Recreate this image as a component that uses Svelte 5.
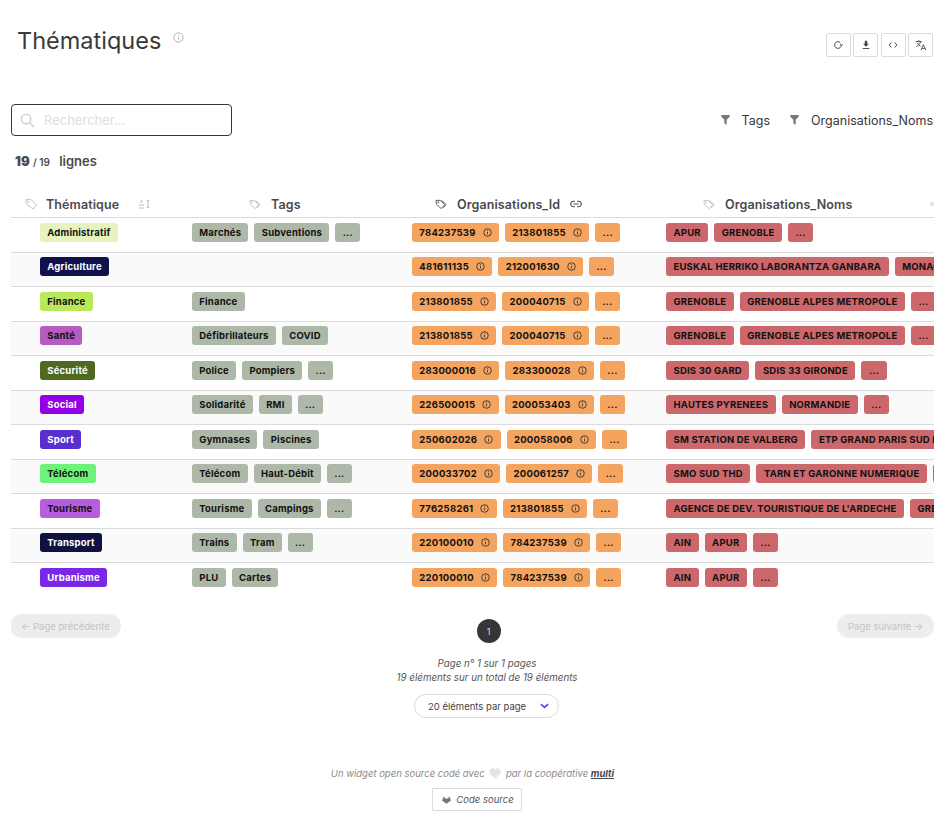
<script>
    const rows = [
        { name: 'Administratif', color: '#e6f3bf', light: true, tags: ['Marchés', 'Subventions', '...'], ids: ['784237539', '213801855'], noms: ['APUR', 'GRENOBLE', '...'] },
        { name: 'Agriculture', color: '#10104d', tags: [], ids: ['481611135', '212001630'], noms: ['EUSKAL HERRIKO LABORANTZA GANBARA', 'MONACO'] },
        { name: 'Finance', color: '#b9e85a', light: true, tags: ['Finance'], ids: ['213801855', '200040715'], noms: ['GRENOBLE', 'GRENOBLE ALPES METROPOLE', '...'] },
        { name: 'Santé', color: '#b45cc0', light: true, tags: ['Défibrillateurs', 'COVID'], ids: ['213801855', '200040715'], noms: ['GRENOBLE', 'GRENOBLE ALPES METROPOLE', '...'] },
        { name: 'Sécurité', color: '#4f6a1f', tags: ['Police', 'Pompiers', '...'], ids: ['283000016', '283300028'], noms: ['SDIS 30 GARD', 'SDIS 33 GIRONDE', '...'] },
        { name: 'Social', color: '#9300e6', tags: ['Solidarité', 'RMI', '...'], ids: ['226500015', '200053403'], noms: ['HAUTES PYRENEES', 'NORMANDIE', '...'] },
        { name: 'Sport', color: '#5a2fd0', tags: ['Gymnases', 'Piscines'], ids: ['250602026', '200058006'], noms: ['SM STATION DE VALBERG', 'ETP GRAND PARIS SUD EST'] },
        { name: 'Télécom', color: '#6df27a', light: true, tags: ['Télécom', 'Haut-Débit', '...'], ids: ['200033702', '200061257'], noms: ['SMO SUD THD', 'TARN ET GARONNE NUMERIQUE', '...'] },
        { name: 'Tourisme', color: '#b85ce0', light: true, tags: ['Tourisme', 'Campings', '...'], ids: ['776258261', '213801855'], noms: ["AGENCE DE DEV. TOURISTIQUE DE L'ARDECHE", 'GRENOBLE'] },
        { name: 'Transport', color: '#0f1240', tags: ['Trains', 'Tram', '...'], ids: ['220100010', '784237539'], noms: ['AIN', 'APUR', '...'] },
        { name: 'Urbanisme', color: '#7a28e8', tags: ['PLU', 'Cartes'], ids: ['220100010', '784237539'], noms: ['AIN', 'APUR', '...'] }
    ]
</script>

{#snippet tagIcon(dark)}
    <svg class="tag-icon" class:dark viewBox="0 0 14 12" width="13" height="11" fill="none" stroke="currentColor" stroke-width="1">
        <path d="M1 1.500h4.500l5 4.500-3.700 4.500L1.500 5.800z" />
        <path d="M7 1.500l5 4.500-3 3.600" />
        <circle cx="3.500" cy="3.600" r=".6" />
    </svg>
{/snippet}

{#snippet infoIcon()}
    <svg class="info" viewBox="0 0 10 10" width="9" height="9" fill="none" stroke="currentColor" stroke-width="1">
        <circle cx="5" cy="5" r="4.200" />
        <path d="M5 4.500v2.600M5 2.600v1" />
    </svg>
{/snippet}

<div class="page">
    <header class="top">
        <h1>Thématiques
            <svg class="title-info" viewBox="0 0 12 12" width="11" height="11" fill="none" stroke="currentColor" stroke-width="1">
                <circle cx="6" cy="6" r="5" />
                <path d="M6 5.400v3M6 3.200v1.100" />
            </svg>
        </h1>
        <div class="tools">
            <button aria-label="Recharger">
                <svg viewBox="0 0 12 12" width="10" height="10" fill="none" stroke="currentColor" stroke-width="1.200"><path d="M10 6a4 4 0 1 1-1.200-2.800" /><path d="M11.400 5L10 6.600 8.600 5" /></svg>
            </button>
            <button aria-label="Télécharger">
                <svg viewBox="0 0 12 12" width="10" height="10" fill="currentColor"><path d="M4.600 1h2.800v3.600h2L6 8 2.600 4.600h2z" /><rect x="2" y="9.600" width="8" height="1.100" /></svg>
            </button>
            <button aria-label="Code">
                <svg viewBox="0 0 12 12" width="10" height="10" fill="none" stroke="currentColor" stroke-width="1.100"><path d="M4 3L1.400 6 4 9M8 3l2.600 3L8 9" /></svg>
            </button>
            <button aria-label="Traduire">
                <svg viewBox="0 0 14 14" width="12" height="12" fill="none" stroke="currentColor" stroke-width="1"><path d="M1 3h7M4.400 1.200V3M6.600 3C6 5.600 4 7.600 1.400 8.800M2.800 4.600c.7 1.600 2 3 3.600 3.800M7.200 13l2.600-6.400L12.600 13M8.100 11h3.600" /></svg>
            </button>
        </div>
    </header>

    <div class="filters">
        <label class="search">
            <svg viewBox="0 0 16 16" width="15" height="15" fill="none" stroke="#cfcfcf" stroke-width="1.500"><circle cx="6.500" cy="6.500" r="5" /><path d="M10.200 10.200L15 15" /></svg>
            <input type="text" placeholder="Rechercher..." />
        </label>
        <div class="facets">
            <span class="facet"><svg viewBox="0 0 10 12" width="9" height="10" fill="#777"><path d="M0 0h10v2L6.400 5.600V12L3.600 10V5.600L0 2z" /></svg>Tags</span>
            <span class="facet"><svg viewBox="0 0 10 12" width="9" height="10" fill="#777"><path d="M0 0h10v2L6.400 5.600V12L3.600 10V5.600L0 2z" /></svg>Organisations_Noms</span>
        </div>
    </div>

    <p class="count"><b>19</b> <small>/ 19</small> <span>lignes</span></p>

    <div class="table">
        <div class="row head">
            <div class="col c1">
                <svg class="tag-icon" viewBox="0 0 14 12" width="13" height="12" fill="none" stroke="currentColor" stroke-width="1"><path d="M1 1h5l6.500 6-4 4.500L1.500 5.800z" /><circle cx="3.700" cy="3.500" r=".6" /></svg>
                <span>Thématique</span>
                <svg class="sort" viewBox="0 0 12 10" width="12" height="10" fill="none" stroke="#bbb" stroke-width="1"><path d="M1 9h5M1 6h5M2.500 3h2M3.500 1v2M10 1v8M8.800 2.200L10 1l1.200 1.200M8.800 7.800L10 9l1.200-1.200" /></svg>
            </div>
            <div class="col c2">{@render tagIcon(false)}<span>Tags</span></div>
            <div class="col c3">{@render tagIcon(true)}<span>Organisations_Id</span>
                <svg class="link" viewBox="0 0 12 8" width="12" height="8" fill="none" stroke="#555" stroke-width="1.100"><path d="M5 1.200H3.500a2.800 2.800 0 0 0 0 5.600H5M7 1.200h1.500a2.800 2.800 0 0 1 0 5.600H7M3.500 4h5" /></svg>
            </div>
            <div class="col c4">{@render tagIcon(false)}<span>Organisations_Noms</span><i class="dot"></i></div>
        </div>
        {#each rows as r}
            <div class="row">
                <div class="col c1"><span class="tag" class:on-light={r.light} style="background:{r.color}">{r.name}</span></div>
                <div class="col c2">{#each r.tags as t}<span class="tag grey">{t}</span>{/each}</div>
                <div class="col c3">
                    {#each r.ids as id}<span class="tag orange">{id}{@render infoIcon()}</span>{/each}
                    <span class="tag orange">...</span>
                </div>
                <div class="col c4">{#each r.noms as n}<span class="tag red">{n}</span>{/each}</div>
            </div>
        {/each}
    </div>

    <nav class="pager">
        <button class="pill" disabled>← Page précédente</button>
        <span class="current">1</span>
        <button class="pill" disabled>Page suivante →</button>
    </nav>

    <div class="summary">
        <p>Page n° 1 sur 1 pages</p>
        <p>19 éléments sur un total de 19 éléments</p>
    </div>
    <div class="per-page">
        <span>20 éléments par page</span>
        <svg viewBox="0 0 10 6" width="9" height="6" fill="none" stroke="#6a3fd8" stroke-width="1.800"><path d="M1 1l4 3.600L9 1" /></svg>
    </div>

    <footer>
        <p>Un widget open source codé avec
            <svg viewBox="0 0 16 14" width="12" height="11" fill="#e4e4e4"><path d="M8 14L1.200 7.200A4 4 0 0 1 8 2a4 4 0 0 1 6.800 5.200z" /></svg>
            par la coopérative <a href="#top">multi</a></p>
        <span class="source">
            <svg viewBox="0 0 12 10" width="9" height="8" fill="#777"><path d="M2.500 0L4 3h4L9.500 0 12 5.500 6 10 0 5.500z" /></svg>
            Code source
        </span>
    </footer>
</div>

<style>
    :global(body) {
        margin: 0;
        background: #fff;
        overflow: hidden;
    }
    .page {
        width: 923px;
        margin-left: 11px;
        height: 823px;
        overflow: hidden;
        font-family: Inter, "Noto Sans", sans-serif;
        color: #363636;
    }
    .top {
        display: flex;
        justify-content: space-between;
        height: 104px;
    }
    h1 {
        margin: 26px 0 0 6px;
        font-size: 23.500px;
        line-height: 29px;
        font-weight: 400;
        color: #3a3a3a;
    }
    .title-info {
        color: #aaa;
        margin-left: 5px;
        vertical-align: 6px;
    }
    .tools {
        display: flex;
        gap: 2.500px;
        margin: 33px 1px 0 0;
    }
    .tools button {
        width: 25px;
        height: 24px;
        padding: 0;
        display: flex;
        align-items: center;
        justify-content: center;
        background: #fff;
        border: 1px solid #dbdbdb;
        border-radius: 2px;
        color: #444;
    }
    .filters {
        display: flex;
        justify-content: space-between;
        align-items: center;
        height: 32px;
    }
    .search {
        width: 221px;
        height: 32px;
        box-sizing: border-box;
        border: 1px solid #363636;
        border-radius: 4px;
        display: flex;
        align-items: center;
        gap: 9px;
        padding-left: 8px;
    }
    .search input {
        border: 0;
        outline: 0;
        width: 180px;
        padding: 0;
        font: 13px Inter, sans-serif;
    }
    .search input::placeholder {
        color: #dedede;
    }
    .facets {
        display: flex;
        gap: 20px;
        margin-right: 1px;
        font-size: 12.500px;
    }
    .facet {
        display: flex;
        align-items: center;
        gap: 12px;
    }
    .count {
        margin: 17px 0 0 4px;
        height: 40px;
        font-size: 13px;
        line-height: 16px;
        color: #4a4a4a;
        font-weight: 600;
    }
    .count small {
        font-size: 10px;
    }
    .count span {
        margin-left: 6px;
    }
    .row {
        display: flex;
        align-items: center;
        box-sizing: border-box;
        height: 34.500px;
        padding-bottom: 5px;
        border-bottom: 1px solid #dbdbdb;
        white-space: nowrap;
    }
    .row:nth-child(odd) {
        background: #fafafa;
    }
    .row:last-child {
        border-bottom: 0;
    }
    .row.head {
        height: 25px;
        padding-bottom: 2px;
        background: #fff;
        font-size: 12.500px;
        font-weight: 600;
        letter-spacing: .1px;
        color: #4a4a4a;
    }
    .col {
        display: flex;
        align-items: center;
        gap: 6px;
        overflow: hidden;
        flex: none;
        box-sizing: border-box;
    }
    .c1 { width: 181px; padding-left: 29px; }
    .c2 { width: 220px; }
    .c3 { width: 254px; }
    .c4 { width: 268px; }
    .head .c1 { padding-left: 14px; }
    .head .c1 span { margin: 0 13px 0 2px; }
    .head .c2 { padding-left: 57px; }
    .head .c2 span { margin-left: 3px; }
    .head .c3 { padding-left: 23px; }
    .head .c3 span { margin: 0 4px 0 3px; }
    .head .c4 { padding-left: 37px; position: relative; }
    .head .c4 span { margin-left: 3px; }
    .tag-icon {
        color: #bdbdbd;
    }
    .tag-icon.dark {
        color: #555;
    }
    .dot {
        position: absolute;
        right: 0;
        width: 4px;
        height: 4px;
        border: 1px solid #ccc;
        border-radius: 50%;
        box-sizing: border-box;
    }
    .tag {
        display: inline-flex;
        align-items: center;
        gap: 7px;
        flex: none;
        height: 19px;
        padding: 0 7.300px;
        border-radius: 3px;
        font-size: 9.500px;
        font-weight: 700;
        letter-spacing: .2px;
        color: #fff;
    }
    .tag.on-light, .tag.grey, .tag.orange, .tag.red {
        color: #111;
    }
    .tag.grey { background: #aeb8a8; }
    .tag.orange { background: #f5a45f; letter-spacing: .27px; }
    .tag.red { background: #cc686b; padding: 0 7.500px; }
    .info {
        color: #333;
    }
    .pager {
        display: flex;
        justify-content: space-between;
        align-items: flex-start;
        margin: 16.500px 0 0 -1px;
        height: 37px;
    }
    .pill {
        height: 24px;
        width: 111px;
        padding: 0;
        border: 0;
        border-radius: 12px;
        background: #ededed;
        color: #c4c4c4;
        font: 9.500px Inter, sans-serif;
    }
    .pill:last-child {
        width: 97px;
    }
    .current {
        width: 24px;
        height: 24px;
        margin-top: 5px;
        margin-left: 19px;
        border-radius: 50%;
        background: #363636;
        color: #ddd;
        font-size: 9px;
        display: flex;
        align-items: center;
        justify-content: center;
    }
    .summary {
        margin-top: 6px;
        text-align: center;
        font-size: 9.750px;
        line-height: 13.500px;
        font-style: italic;
        color: #555;
        padding-left: 29px;
    }
    .summary p, footer p {
        margin: 0;
    }
    .per-page {
        width: 145px;
        height: 24px;
        margin: 10px 0 0 403px;
        padding: 0 9px 0 13px;
        box-sizing: border-box;
        border: 1px solid #dbdbdb;
        border-radius: 12px;
        display: flex;
        align-items: center;
        justify-content: space-between;
        font-size: 9.500px;
        color: #444;
    }
    footer {
        margin-top: 49px;
        text-align: center;
        font-size: 9.500px;
        font-style: italic;
        color: #8a8a8a;
    }
    footer p {
        line-height: 13px;
    }
    footer svg {
        vertical-align: -2px;
        margin: 0 2px;
    }
    footer a {
        color: #4a4a4a;
        font-weight: 700;
    }
    .source {
        display: inline-flex;
        align-items: center;
        gap: 3px;
        height: 23px;
        width: 90px;
        box-sizing: border-box;
        justify-content: center;
        margin: 8px 0 0 9px;
        border: 1px solid #dbdbdb;
        border-radius: 1px;
        color: #555;
    }
</style>
